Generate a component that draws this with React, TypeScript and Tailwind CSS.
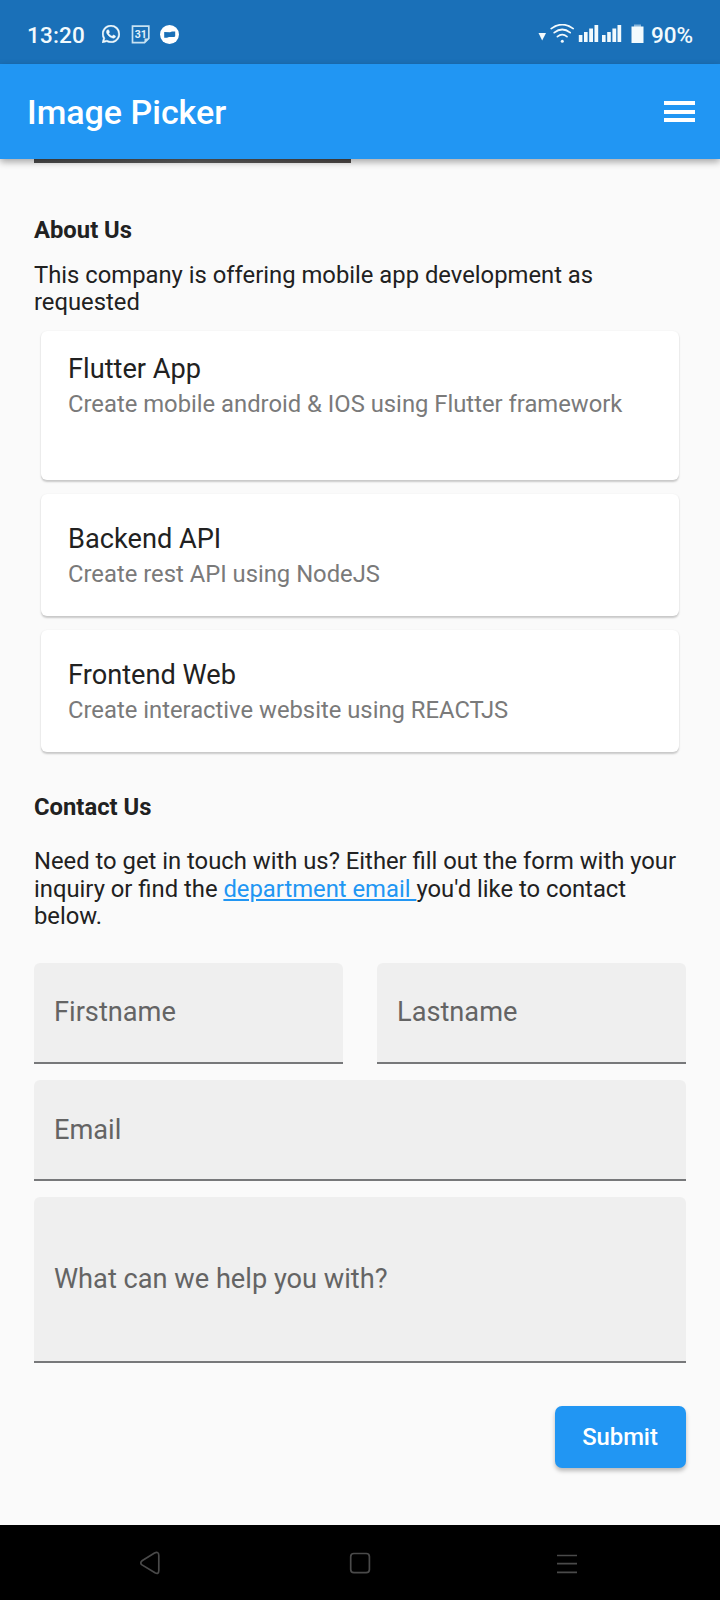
import type { ReactNode } from "react";
import { BsWhatsapp } from "react-icons/bs";

function StatusBar() {
  return (
    <div className="flex h-16 shrink-0 items-start bg-[#1a70b8] text-[#f2fafd]">
      <span className="ml-[27px] mt-[22px] w-[75px] text-[22.5px] leading-[27px] font-medium tracking-[0.2px]">13:20</span>
      <BsWhatsapp className="mt-[25px] size-[18px]" stroke="currentColor" strokeWidth="0.4" />
      <svg className="ml-[11px] mt-[25px]" width="20" height="19" viewBox="0 0 20 19" fill="none">
        <path d="M1.500 1.200H17.800V13.500L13.500 17.700H1.500Z" stroke="#c8e2f2" strokeWidth="1.700" />
        <path d="M13.500 17.700V13.500H17.800Z" fill="#c8e2f2" />
        <text x="9.700" y="13" fontSize="10.500" fontWeight="700" textAnchor="middle" fill="#e4f2fa">31</text>
      </svg>
      <svg className="ml-[9px] mt-[25px]" width="20" height="20" viewBox="0 0 20 20">
        <circle cx="9.500" cy="9.500" r="9.500" fill="#fff" />
        <path d="M4.200 7L10 7.200L12 6.400H15.200V11.200L14.300 12H9L7 12.700H4.200Z" fill="#1a70b8" />
      </svg>
      <svg className="ml-auto mt-6" width="106" height="20" viewBox="0 0 106 20" fill="#f2fafd">
        <path d="M0.500 9H8L4.200 16.500Z" />
        <g fill="none" stroke="#f2fafd" strokeWidth="1.700" strokeLinecap="round">
          <path d="M13.200 4.600Q24.200 -3.400 35.200 4.600" />
          <path d="M16.200 8.700Q24.200 2.300 32.200 8.700" />
          <path d="M19.400 12.600Q24.200 8.600 29 12.600" />
        </g>
        <circle cx="24.300" cy="17.200" r="1.500" />
        <path d="M40.800 11h3.600v7h-3.600zM46 8h3.600v10H46zM51.200 4.500h3.800V18h-3.800zM56.500 1h3.700v17h-3.700z" />
        <path d="M64 11h3.600v7H64zM69.200 8h3.600v10h-3.600zM74.400 4.500h3.800V18h-3.800zM79.500 1h3.700v17h-3.700z" />
        <path d="M96 0.500h7V3h-7z" opacity=".5" />
        <path d="M93.500 2.500h12V19h-12z" />
      </svg>
      <span className="ml-[7px] mr-[27px] mt-[22px] w-[42px] text-[22.5px] leading-[27px] font-medium">90%</span>
    </div>
  );
}

function AppBar() {
  return (
    <div className="relative z-10 flex h-[95px] shrink-0 items-center bg-[#2196f3] pl-[27px] pr-[25px] shadow-[0_3px_7px_rgba(0,0,0,0.34)]">
      <h1 className="flex-1 text-[34px] leading-[40px] font-medium text-white">Image Picker</h1>
      <svg width="31" height="23" viewBox="0 0 31 23" fill="#fff">
        <path d="M0 1h31v4H0zM0 10h31v4H0zM0 18h31v4H0z" />
      </svg>
    </div>
  );
}

function ServiceCard({ title, text, box }: { title: string; text: string; box: string }) {
  return (
    <div className={`mx-[7px] rounded-[6px] bg-white pl-[27px] shadow-[0_1.5px_2px_rgba(0,0,0,0.2),0_0_2px_rgba(0,0,0,0.02)] ${box}`}>
      <h3 className="text-[27.2px] leading-8 text-[#212121]">{title}</h3>
      <p className="mt-[6px] text-[23.8px] leading-[27.2px] text-[#7a7a7a]">{text}</p>
    </div>
  );
}

function Field({ label, box }: { label: string; box: string }) {
  return (
    <label className={`flex items-center rounded-t-[6px] border-b-2 border-[#77787a] bg-[#efefef] pl-5 text-[27.2px] leading-8 text-[#646464] ${box}`}>
      {label}
    </label>
  );
}

function Heading({ children }: { children: ReactNode }) {
  return <h2 className="text-[23.8px] leading-[27.2px] font-bold">{children}</h2>;
}

function NavBar() {
  return (
    <div className="h-[75px] shrink-0 bg-black">
      <svg width="720" height="75" viewBox="0 0 720 75" fill="none" stroke="#4a4a4a" strokeWidth="1.7">
        <path d="M142 35.800L154.500 28Q158.700 26 158.800 30.500V45.500Q158.700 49.800 155 47.700L142 39.900Q139.600 38 142 35.800Z" />
        <rect x="350.7" y="28.5" width="18.7" height="19.2" rx="3.2" />
        <path d="M557 30.500h20M557 38.700h20M557 47.300h20" />
      </svg>
    </div>
  );
}

export default function App() {
  return (
    <div className="flex h-[1600px] w-[720px] flex-col overflow-hidden bg-[#fafafa] font-[Roboto,sans-serif] text-[#212121]">
      <StatusBar />
      <AppBar />
      <main className="flex min-h-0 flex-1 flex-col px-[34px] text-[23.8px] leading-[27.2px]">
        <div className="h-1 w-[317px] shrink-0 bg-linear-to-r from-[#4c4c4c] via-[#606060] to-[#4f4a48]" />
        <div className="mt-[54px]"><Heading>About Us</Heading></div>
        <p className="mt-[17.8px]">This company is offering mobile app development as requested</p>
        <div className="mt-[14.6px] flex flex-col gap-[14px]">
          <ServiceCard title="Flutter App" text="Create mobile android & IOS using Flutter framework" box="h-[149px] pt-[22px]" />
          <ServiceCard title="Backend API" text="Create rest API using NodeJS" box="h-[122px] pt-[29px]" />
          <ServiceCard title="Frontend Web" text="Create interactive website using REACTJS" box="h-[122px] pt-[29px]" />
        </div>
        <div className="mt-[42px]"><Heading>Contact Us</Heading></div>
        <p className="mt-[26.8px] leading-[27.5px]">
          Need to get in touch with us? Either fill out the form with your inquiry or find the{" "}
          <a className="text-[#2196f3] underline">department email </a>you'd like to contact below.
        </p>
        <div className="mt-[32.5px] flex gap-[34px]">
          <Field label="Firstname" box="h-[101px] flex-1 pb-[1px]" />
          <Field label="Lastname" box="h-[101px] flex-1 pb-[1px]" />
        </div>
        <Field label="Email" box="mt-4 h-[101px] shrink-0 pt-[1px]" />
        <Field label="What can we help you with?" box="mt-4 h-[166px] shrink-0" />
        <button className="mt-[43px] h-[62px] w-[131px] shrink-0 self-end rounded-[7px] bg-[#2196f3] pr-[1px] pt-[2px] text-[23.8px] font-medium text-white shadow-[0_3px_4px_rgba(0,0,0,0.26)]">
          Submit
        </button>
      </main>
      <NavBar />
    </div>
  );
}
